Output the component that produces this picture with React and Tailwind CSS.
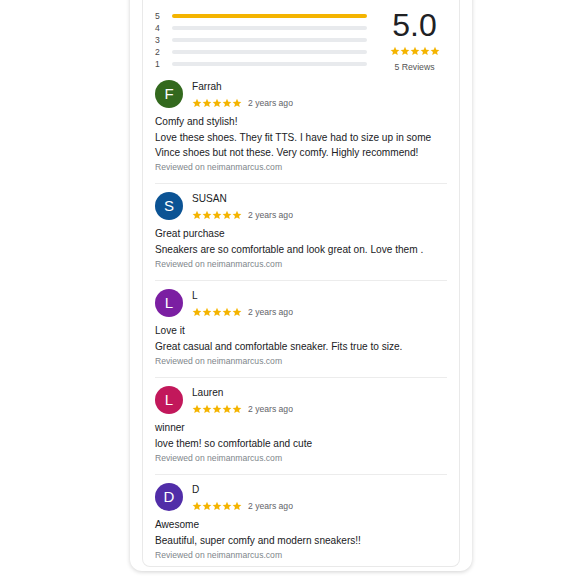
import React from 'react';

// --- rating summary + list of reviews, as in the product page widget ---
const reviews = [
  {
    name: 'Farrah',
    color: 'bg-[#33691e]',
    title: 'Comfy and stylish!',
    body: ['Love these shoes. They fit TTS. I have had to size up in some', 'Vince shoes but not these. Very comfy. Highly recommend!'],
  },
  {
    name: 'SUSAN',
    color: 'bg-[#0b5394]',
    title: 'Great purchase',
    body: ['Sneakers are so comfortable and look great on. Love them .'],
  },
  {
    name: 'L',
    color: 'bg-[#7b1fa2]',
    title: 'Love it',
    body: ['Great casual and comfortable sneaker. Fits true to size.'],
  },
  {
    name: 'Lauren',
    color: 'bg-[#c2185b]',
    title: 'winner',
    body: ['love them! so comfortable and cute'],
  },
  {
    name: 'D',
    color: 'bg-[#512da8]',
    title: 'Awesome',
    body: ['Beautiful, super comfy and modern sneakers!!'],
  },
];

const Star = () => (
  <svg width="10" height="10" viewBox="0 0 24 24" className="shrink-0">
    <path fill="#f4b400" d="M12 1.8l3.1 6.9 7.4.7-5.6 5 1.7 7.4L12 18l-6.6 3.8 1.7-7.4-5.6-5 7.4-.7z" />
  </svg>
);

const Stars = () => (
  <div className="flex items-center">
    {[0, 1, 2, 3, 4].map(i => <Star key={i} />)}
  </div>
);

const Summary = () => {
  const rows = [5, 4, 3, 2, 1];
  return (
    <div className="flex h-[63px]">
      <div className="w-[212px] pt-[1px] flex flex-col">
        {rows.map(n => (
          <div key={n} className="flex items-center h-[12px]">
            <span className="w-[17px] text-[8.6px] leading-none text-[#4a4a4a]">{n}</span>
            <div className={`w-[195px] h-[4px] rounded-full ${n === 5 ? 'bg-[#f4b400]' : 'bg-[#e8eaed]'}`} />
          </div>
        ))}
      </div>
      <div className="ml-[15px] w-[66px] flex flex-col items-center">
        <div className="text-[32px] leading-[32px] text-[#202124]">5.0</div>
        <div className="mt-[5px]"><Stars /></div>
        <div className="mt-[4px] text-[8.7px] leading-[14px] text-[#555]">5 Reviews</div>
      </div>
    </div>
  );
};

const Review = ({ r, last }) => (
  <div className={`pt-[8px] ${last ? 'pb-[4px]' : 'pb-[9px] border-b border-[#ececec]'}`}>
    <div className="flex">
      <div className={`w-[28px] h-[28px] rounded-full ${r.color} flex items-center justify-center text-white text-[15px]`}>
        {r.name[0]}
      </div>
      <div className="ml-[9px] flex flex-col">
        <div className="text-[10.1px] leading-[14px] text-[#202124]">{r.name}</div>
        <div className="mt-[2px] h-[14px] flex items-center">
          <Stars />
          <span className="ml-[6px] text-[8.6px] text-[#5f6368]">2 years ago</span>
        </div>
      </div>
    </div>
    <div className="mt-[4px] text-[10.1px] leading-[16px] text-[#202124]">{r.title}</div>
    {r.body.map((line, i) => (
      <div key={i} className="text-[10.1px] leading-[15px] text-[#202124] whitespace-nowrap">{line}</div>
    ))}
    <div className="text-[8.6px] leading-[14px] text-[#80868b]">Reviewed on neimanmarcus.com</div>
  </div>
);

export default function App() {
  return (
    <div className="w-[580px] h-[580px] bg-white overflow-hidden font-['Liberation_Sans',Arial,sans-serif]">
      <div className="ml-[130px] mt-[-20px] w-[342px] bg-white rounded-b-[12px] shadow-[0_1px_4px_rgba(0,0,0,0.18)] px-[12px] pb-[4px]">
        <div className="border border-t-0 border-[#e9e9e9] rounded-b-[8px] pt-[29px] pl-[12px] pr-[12px]">
          <Summary />
          {reviews.map((r, i) => (
            <Review key={r.name} r={r} last={i === reviews.length - 1} />
          ))}
        </div>
      </div>
    </div>
  );
}
